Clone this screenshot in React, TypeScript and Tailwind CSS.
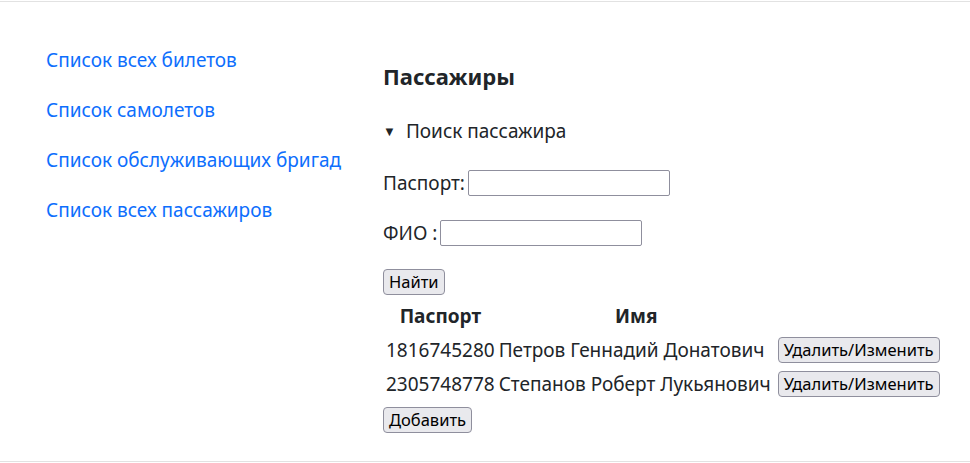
import React from 'react';

const links = [
  'Список всех билетов',
  'Список самолетов',
  'Список обслуживающих бригад',
  'Список всех пассажиров',
];

const passengers = [
  { passport: '1816745280', name: 'Петров Геннадий Донатович' },
  { passport: '2305748778', name: 'Степанов Роберт Лукьянович' },
];

const btn =
  'block rounded-[4px] border border-[#8f8f9d] bg-[#e9e9ed] px-[5px] h-[26px] text-[16.5px] leading-none text-black';

export default function App() {
  return (
    <div
      className="min-h-[463px] bg-white text-[#212529]"
      style={{ fontFamily: '"Noto Sans", "Open Sans", sans-serif' }}
    >
      <div className="mt-px flex h-[461px] border-y border-[#e2e2e2]">
        <nav className="flex w-[383px] flex-col gap-[26px] pl-[46px] pt-[46px]">
          {links.map((l) => (
            <a key={l} href="#" className="text-[19px] leading-[24px] text-[#0d6efd]">
              {l}
            </a>
          ))}
        </nav>

        <main className="flex-1 pt-[59px] text-[19px] leading-[26px]">
          <h2 className="text-[22px] font-bold leading-[30px]">Пассажиры</h2>

          <details open className="mt-[27px]">
            <summary className="flex items-center gap-[10px]">
              <span className="text-[13px]">▼</span>
              Поиск пассажира
            </summary>
          </details>

          <div className="mt-[26px] flex items-center gap-[3px]">
            <span>Паспорт:</span>
            <input className="h-[26px] w-[202px] rounded-[2px] border border-[#8f8f9d]" />
          </div>

          <div className="mt-[24px] flex items-center gap-[3px]">
            <span>ФИО :</span>
            <input className="h-[26px] w-[202px] rounded-[2px] border border-[#8f8f9d]" />
          </div>

          <button className={`${btn} mt-[23px]`}>Найти</button>

          <table className="mt-[3px] border-separate border-spacing-[2px]">
            <thead>
              <tr className="h-[32px]">
                <th className="p-px text-center font-bold">Паспорт</th>
                <th className="p-px text-center font-bold">Имя</th>
                <th />
              </tr>
            </thead>
            <tbody>
              {passengers.map((p) => (
                <tr key={p.passport} className="h-[32px]">
                  <td className="p-px">{p.passport}</td>
                  <td className="py-px pl-px pr-[4px]">{p.name}</td>
                  <td className="p-px">
                    <button className={btn}>Удалить/Изменить</button>
                  </td>
                </tr>
              ))}
            </tbody>
          </table>

          <button className={`${btn} mt-[5px]`}>Добавить</button>
        </main>
      </div>
    </div>
  );
}
